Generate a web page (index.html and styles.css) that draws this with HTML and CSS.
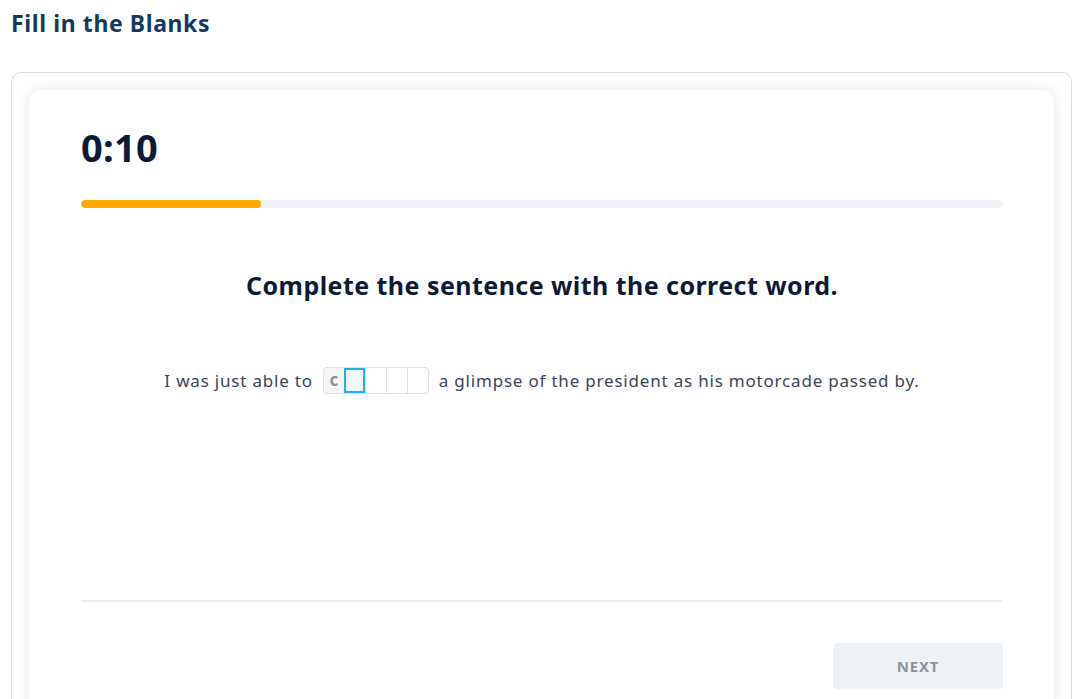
FILE: index.html
```html
<!DOCTYPE html>
<html lang="en">
<head>
<meta charset="utf-8">
<title>Fill in the Blanks</title>
<link rel="stylesheet" href="styles.css">
</head>
<body>
<h1 class="page-title">Fill in the Blanks</h1>
<div class="frame">
  <div class="card">
    <div class="timer">0:10</div>
    <div class="progress"><div class="progress-fill" style="width:19.5%"></div></div>
    <h2 class="prompt">Complete the sentence with the correct word.</h2>
    <p class="sentence">
      <span>I was just able to</span>
      <span class="blank">
        <span class="cell given">c</span>
        <span class="cell active"></span>
        <span class="cell"></span>
        <span class="cell"></span>
        <span class="cell"></span>
      </span>
      <span>a glimpse of the president as his motorcade passed by.</span>
    </p>
    <div class="spacer"></div>
    <hr class="divider">
    <div class="actions">
      <button class="next" type="button">NEXT</button>
    </div>
  </div>
</div>
</body>
</html>
```

FILE: styles.css
```css
* { box-sizing: border-box; }
html, body { margin: 0; background: #fff; }
html { overflow: hidden; height: 699px; }
body {
  padding: 0 11px;
  font-family: "Noto Sans", "DejaVu Sans", sans-serif;
  overflow: hidden;
  height: 699px;
}
.page-title {
  margin: 0;
  height: 46px;
  line-height: 46px;
  font-size: 23px;
  letter-spacing: 0.6px;
  font-weight: 700;
  color: #15395e;
}
.frame {
  margin-top: 26px;
  border: 1px solid #dcdcdc;
  border-bottom: none;
  border-radius: 10px 10px 0 0;
  padding: 17px 17px 0 17px;
  height: 627px;
  overflow: hidden;
}
.card {
  background: #fff;
  border-radius: 12px 12px 0 0;
  box-shadow: 0 0 14px rgba(0, 0, 0, 0.09);
  padding: 33px 51px 0 52px;
  height: 620px;
  display: flex;
  flex-direction: column;
}
.timer {
  font-size: 38px;
  line-height: 48px;
  font-weight: 700;
  letter-spacing: 0.3px;
  color: #0c1b35;
}
.progress {
  margin-top: 29px;
  height: 8px;
  border-radius: 4px;
  background: #eef2f6;
  overflow: hidden;
}
.progress-fill {
  height: 100%;
  background: #ffa800;
  border-radius: 4px;
}
.prompt {
  margin: 59px 0 0 0;
  text-align: center;
  font-size: 25px;
  letter-spacing: 0.45px;
  line-height: 36px;
  font-weight: 700;
  color: #0c1b35;
}
.sentence {
  margin: 64px 0 0 0;
  display: flex;
  justify-content: center;
  align-items: center;
  gap: 10px;
  font-size: 17px;
  letter-spacing: 0.8px;
  color: #3b4656;
  height: 27px;
}
.blank {
  display: flex;
  height: 27px;
  border: 1px solid #dcdfe3;
  border-radius: 4px;
  overflow: hidden;
  letter-spacing: 0;
}
.cell {
  width: 21px;
  height: 100%;
  border-left: 1px solid #dcdfe3;
  display: flex;
  align-items: center;
  justify-content: center;
}
.cell:first-child { border-left: none; width: 20px; }
.cell.given {
  background: #f3f5f7;
  color: #8c939c;
  font-weight: 700;
  font-size: 17px;
  padding-bottom: 2px;
}
.cell.active {
  border: 2px solid #23aef0;
  background: #f1f8ff;
}
.spacer { height: 206px; }
.divider {
  margin: 0;
  border: none;
  border-top: 2px solid #eceef0;
}
.actions {
  margin-top: 41px;
  display: flex;
  justify-content: flex-end;
}
.next {
  width: 170px;
  height: 46px;
  border: none;
  border-radius: 4px;
  background: #eef2f5;
  color: #8a939c;
  font-family: "Noto Sans", "DejaVu Sans", sans-serif;
  font-size: 15px;
  font-weight: 700;
  letter-spacing: 0.8px;
}
```
